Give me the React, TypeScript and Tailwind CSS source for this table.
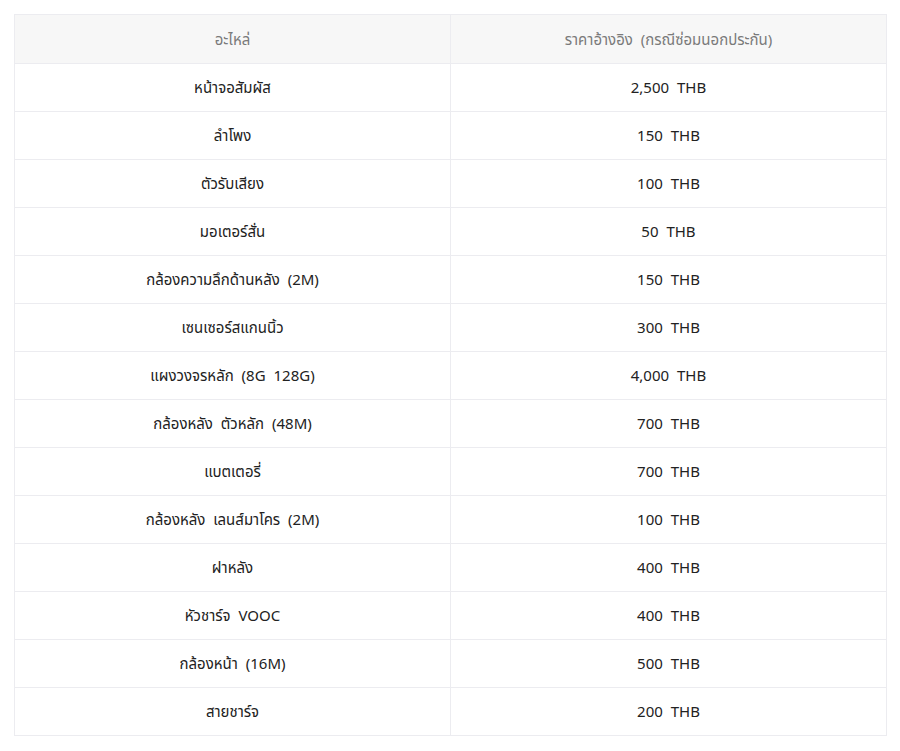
import React from "react";

const rows: [string, string][] = [
  ["หน้าจอสัมผัส", "2,500 THB"],
  ["ลำโพง", "150 THB"],
  ["ตัวรับเสียง", "100 THB"],
  ["มอเตอร์สั่น", "50 THB"],
  ["กล้องความลึกด้านหลัง (2M)", "150 THB"],
  ["เซนเซอร์สแกนนิ้ว", "300 THB"],
  ["แผงวงจรหลัก (8G 128G)", "4,000 THB"],
  ["กล้องหลัง ตัวหลัก (48M)", "700 THB"],
  ["แบตเตอรี่", "700 THB"],
  ["กล้องหลัง เลนส์มาโคร (2M)", "100 THB"],
  ["ฝาหลัง", "400 THB"],
  ["หัวชาร์จ VOOC", "400 THB"],
  ["กล้องหน้า (16M)", "500 THB"],
  ["สายชาร์จ", "200 THB"],
];

export default function App() {
  return (
    <div className="bg-white w-[900px] h-[751px] pt-[14px] pl-[14px]" style={{ fontFamily: '"Noto Sans Thai", "Noto Sans", sans-serif' }}>
      <table className="w-[873px] border-collapse table-fixed text-[15px] [word-spacing:4px]">
        <thead>
          <tr className="bg-[#f7f7f7]">
            <th className="h-[49px] border border-[#ececf0] font-normal text-[#7a7a7a] text-center px-0 pt-[4px] pb-0">อะไหล่</th>
            <th className="h-[49px] border border-[#ececf0] font-normal text-[#7a7a7a] text-center px-0 pt-[4px] pb-0">ราคาอ้างอิง (กรณีซ่อมนอกประกัน)</th>
          </tr>
        </thead>
        <tbody>
          {rows.map(([a, b]) => (
            <tr key={a}>
              <td className="h-[48px] border border-[#ececf0] text-[#222222] text-center px-0 pt-[4px] pb-0">{a}</td>
              <td className="h-[48px] border border-[#ececf0] text-[#222222] text-center px-0 pt-[4px] pb-0">{b}</td>
            </tr>
          ))}
        </tbody>
      </table>
    </div>
  );
}
